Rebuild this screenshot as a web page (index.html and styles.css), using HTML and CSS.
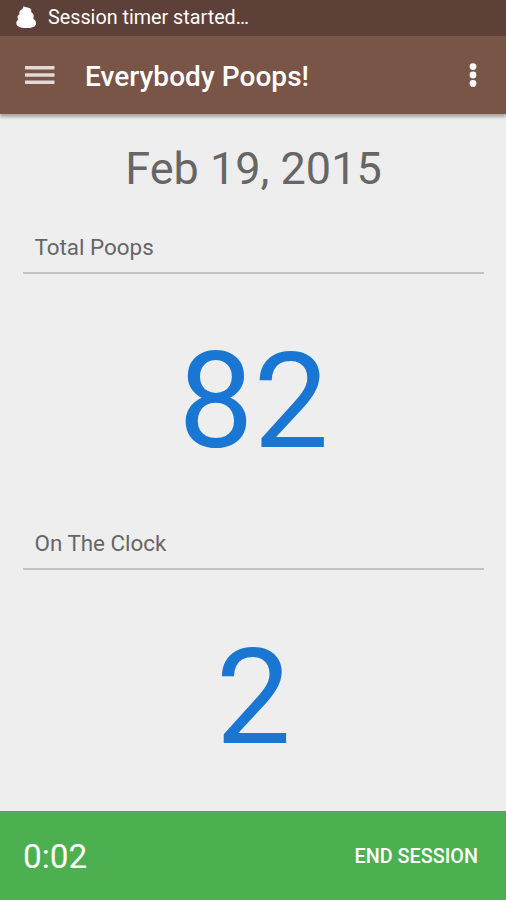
FILE: index.html
```html
<!DOCTYPE html>
<html lang="en">
<head>
<meta charset="utf-8">
<title>Everybody Poops!</title>
<link rel="stylesheet" href="styles.css">
</head>
<body>
<div class="status">
<svg class="poop" viewBox="0 0 22 24" width="22" height="24"><path fill="#fff" d="M8.500 1C9.500 2 10.500 2.300 12.500 2.600c2.600.3 4 1.600 3.800 3.300-.1.700-.2 1 .3 1.500 1.500 1 2.300 2.200 2.100 4-.1 1.200-.5 2-.2 2.700 1.700 1 2.500 2.500 2.500 4.300 0 3.200-4.200 4.700-9.700 4.700S1.300 21.500 1.300 18.300c0-1.700.8-3 2.200-3.800-.7-.7-1.200-1.500-1-2.600.2-1.400 1-2.100 2.100-2.700-.4-1-.3-2.400.3-3.300.8-1.200 2.100-1.600 2.900-2.500.4-.7.700-1.400.7-2.400z"/></svg>
<span>Session timer started…</span>
</div>
<header class="bar">
<svg width="30" height="20" viewBox="0 0 30 20"><path fill="#e4d9d4" d="M0 1h29.500v3.400H0zM0 8.300h29.500v3.400H0zM0 15.600h29.500V19H0z"/></svg>
<h1>Everybody Poops!</h1>
<svg class="more" width="8" height="24" viewBox="0 0 8 24" fill="#fff"><circle cx="4" cy="3.600" r="3.400"/><circle cx="4" cy="12" r="3.400"/><circle cx="4" cy="20.400" r="3.400"/></svg>
</header>
<main>
<div class="date">Feb 19, 2015</div>
<h2>Total Poops</h2>
<div class="num">82</div>
<h2>On The Clock</h2>
<div class="num last">2</div>
</main>
<footer><span class="time">0:02</span><span class="end">END SESSION</span></footer>
</body>
</html>
```
FILE: styles.css
```css
* { box-sizing: border-box; margin: 0; }
body { width: 506px; height: 900px; overflow: hidden; display: flex; flex-direction: column; background: #eee; font-family: Roboto, sans-serif; }
.status { height: 36px; flex: none; background: #5d4037; display: flex; align-items: center; padding: 0 0 2px 15px; gap: 11px; color: #fff; font-size: 19.75px; }
.bar { height: 78px; flex: none; background: #795548; display: flex; align-items: center; padding: 0 29px 0 25px; color: #fff; box-shadow: 0 3px 3px rgba(0,0,0,.3); }
h1 { font-size: 28px; letter-spacing: .06px; font-weight: 500; margin-left: 30px; flex: 1; padding-top: 3px; }
main { flex: 1; padding: 0 22px 0 23px; }
.date { height: 107px; line-height: 110px; text-align: center; font-size: 45px; color: #666; }
h2 { height: 53px; line-height: 53px; padding-left: 11.5px; border-bottom: 2px solid #c3c3c3; font-size: 22.4px; font-weight: 400; color: #666; }
.num { height: 243px; line-height: 255px; text-align: center; font-size: 134px; color: #1976d2; }
.last { height: 241px; }
footer { height: 89px; flex: none; background: #4caf50; color: #fff; display: flex; align-items: center; justify-content: space-between; padding: 2px 28px 0 23px; }
.time { font-size: 33.3px; }
.end { font-size: 19.8px; font-weight: 500; }
```
